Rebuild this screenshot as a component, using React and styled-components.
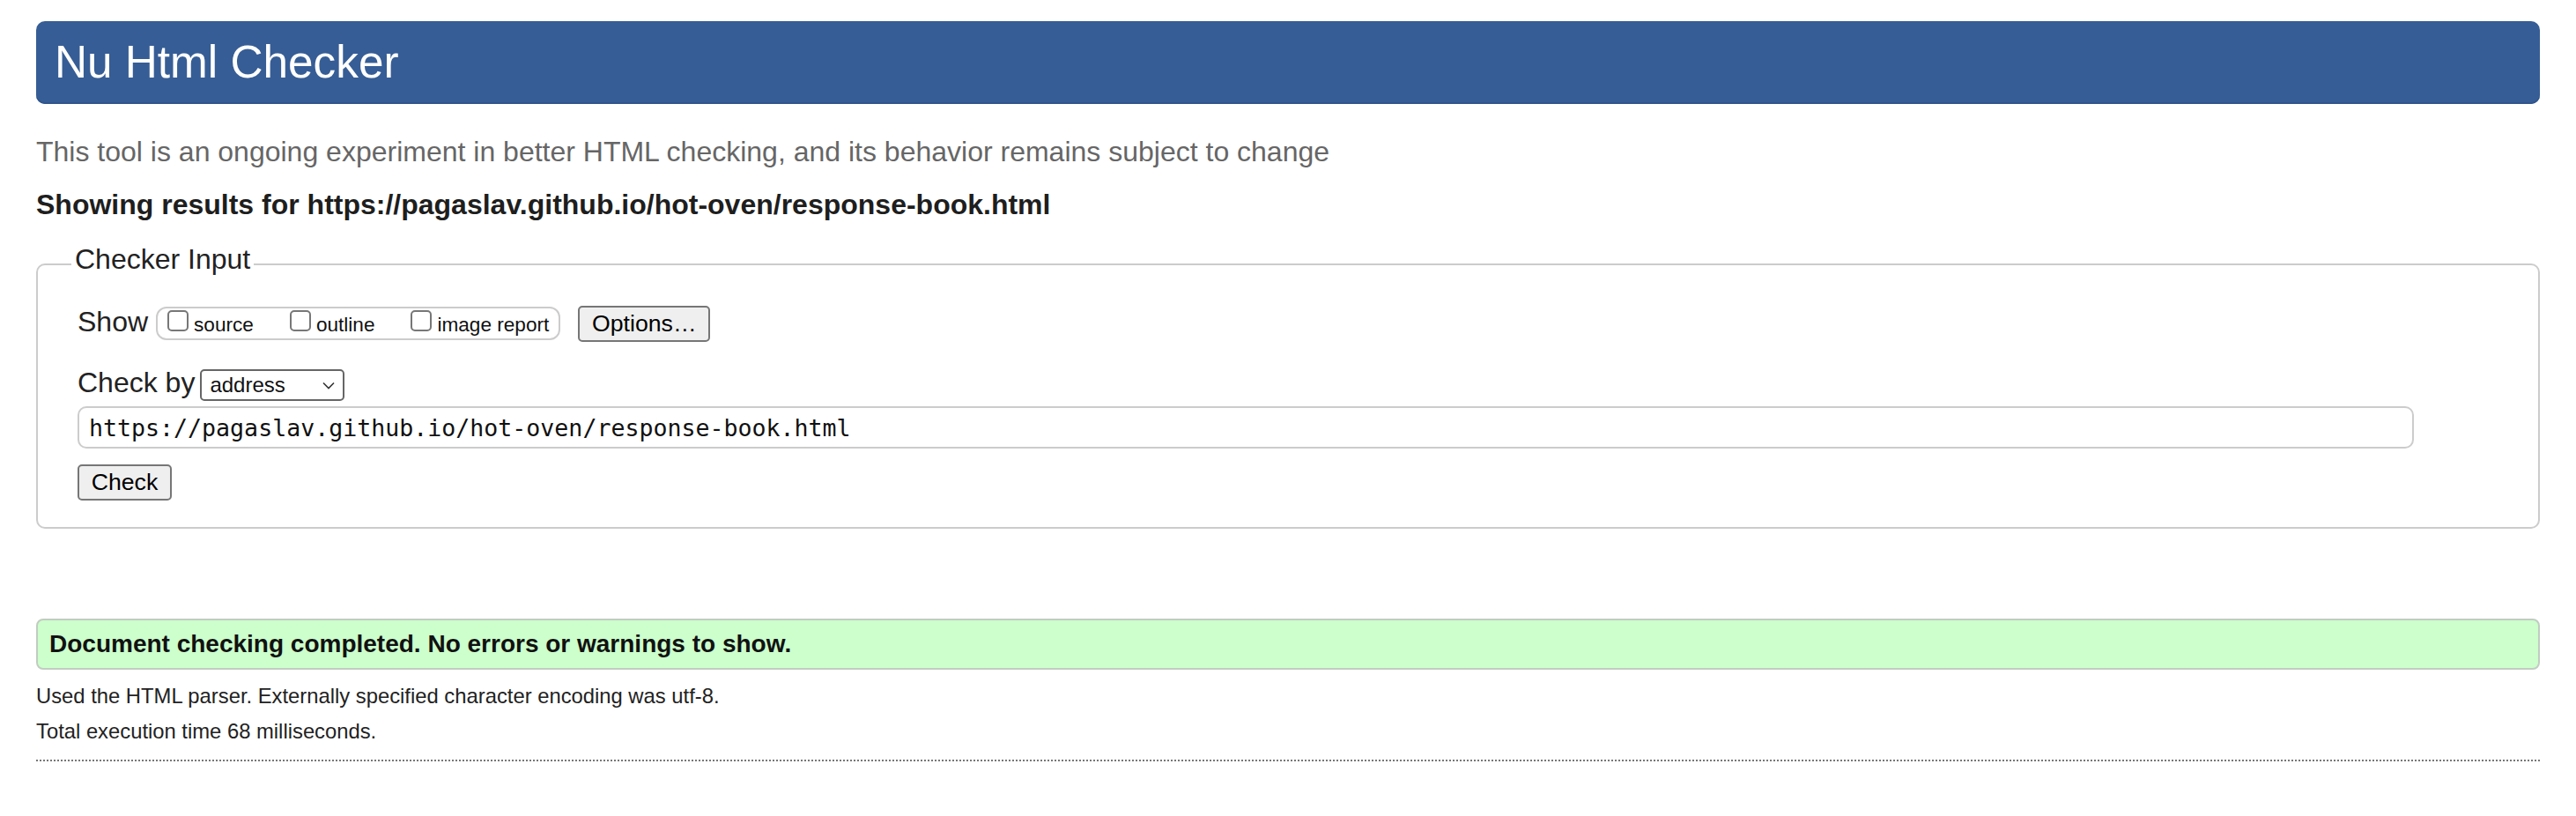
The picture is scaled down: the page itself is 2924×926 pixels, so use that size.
import React from "react";
import styled, { createGlobalStyle } from "styled-components";

const GlobalStyle = createGlobalStyle`
  html, body { margin: 0; padding: 0; background: #fff; }
  body {
    font-family: "Liberation Sans", Arial, Helvetica, sans-serif;
    color: #222;
  }
`;

const Page = styled.div`
  padding: 24px 41px 40px;
`;

const Banner = styled.h1`
  margin: 0;
  height: 94px;
  box-sizing: border-box;
  padding: 0 21px;
  background: #365d95;
  border-radius: 10px;
  box-shadow: inset 0 -2px 0 #30558c;
  color: #fff;
  font-weight: normal;
  font-size: 51.3px;
  line-height: 94px;
`;

const Tagline = styled.p`
  margin: 34px 0 0;
  font-size: 32px;
  line-height: 40px;
  color: #666;
`;

const ResultsFor = styled.h2`
  margin: 20px 0 0;
  font-size: 32px;
  line-height: 40px;
  font-weight: bold;
  color: #1e1e1e;
`;

const InputFieldset = styled.fieldset`
  margin: 22px 0 0;
  min-width: 0;
  border: 2px solid #ccc;
  border-radius: 10px;
  padding: 21px 45px 30px;
`;

const Legend = styled.legend`
  font-size: 32px;
  line-height: 40px;
  padding: 0 4px 12px;
  margin-left: -7px;
  color: #222;
`;

const ControlRow = styled.div`
  display: flex;
  align-items: baseline;
  margin-top: ${(p) => p.$top || 0}px;
`;

const RowLabel = styled.span`
  font-size: 32px;
  line-height: 1;
  color: #222;
  margin-right: ${(p) => p.$gap || 0}px;
`;

const ShowGroup = styled.span`
  display: inline-flex;
  align-items: baseline;
  height: 38px;
  box-sizing: border-box;
  border: 2px solid #ccc;
  border-radius: 12px;
  padding: 2px 11px 0;
  margin-right: 20px;
`;

const ShowOption = styled.label`
  display: inline-flex;
  align-items: baseline;
  margin-left: ${(p) => (p.$first ? 0 : 41)}px;
  font-size: 22.6px;
  line-height: 1.15;
  color: #111;
`;

const CheckBox = styled.span`
  display: inline-block;
  width: 24px;
  height: 24px;
  box-sizing: border-box;
  border: 2px solid #777;
  border-radius: 5px;
  background: #fff;
  margin-right: 6px;
`;

const PushButton = styled.button`
  font-family: "Liberation Sans", Arial, Helvetica, sans-serif;
  font-size: 26.67px;
  line-height: normal;
  color: #000;
  background: #efefef;
  border: 2px solid #767676;
  border-radius: 5px;
  height: 41px;
  box-sizing: border-box;
  width: ${(p) => p.$w}px;
  padding: 0;
  margin-top: ${(p) => p.$top || 0}px;
  display: ${(p) => (p.$block ? "block" : "inline-block")};
`;

const Dropdown = styled.div`
  display: inline-flex;
  align-items: center;
  justify-content: space-between;
  width: 164px;
  height: 36px;
  box-sizing: border-box;
  border: 2px solid #666;
  border-radius: 5px;
  padding: 0 9px 0 9px;
  font-size: 24px;
  color: #111;
  background: #fff;
`;

const UrlField = styled.div`
  margin-top: 6px;
  width: calc(100% - 96px);
  height: 48px;
  box-sizing: border-box;
  border: 2px solid #ccc;
  border-radius: 10px;
  padding: 0 11px;
  display: flex;
  align-items: center;
  font-family: "DejaVu Sans Mono", "Liberation Mono", monospace;
  font-size: 26.6px;
  color: #111;
`;

const SuccessBox = styled.div`
  margin-top: 102px;
  height: 58px;
  box-sizing: border-box;
  background: #ccffcc;
  border: 2px solid #c2ccc2;
  border-radius: 8px;
  padding: 0 13px;
  display: flex;
  align-items: center;
  font-size: 28px;
  font-weight: bold;
  color: #111;
`;

const Details = styled.div`
  margin-top: 10px;
`;

const DetailLine = styled.p`
  margin: 0;
  font-size: 23.8px;
  line-height: 40px;
  color: #222;
`;

const Separator = styled.hr`
  margin: 12px 0 0;
  border: 0;
  border-top: 2px dotted #777;
  height: 0;
`;

function Chevron() {
  return (
    <svg width="14" height="9" viewBox="0 0 14 9" aria-hidden="true">
      <path d="M1 1.5 L7 7.5 L13 1.5" fill="none" stroke="#333" strokeWidth="1.6" />
    </svg>
  );
}

const options = ["source", "outline", "image report"];

export default function App() {
  return (
    <>
      <GlobalStyle />
      <Page>
        <Banner>Nu Html Checker</Banner>
        <Tagline>
          This tool is an ongoing experiment in better HTML checking, and its behavior remains subject to change
        </Tagline>
        <ResultsFor>Showing results for https://pagaslav.github.io/hot-oven/response-book.html</ResultsFor>
        <InputFieldset>
          <Legend>Checker Input</Legend>
          <ControlRow>
            <RowLabel $gap={9}>Show</RowLabel>
            <ShowGroup>
              {options.map((o, i) => (
                <ShowOption key={o} $first={i === 0}>
                  <CheckBox />
                  {o}
                </ShowOption>
              ))}
            </ShowGroup>
            <PushButton $w={150}>Options…</PushButton>
          </ControlRow>
          <ControlRow $top={30}>
            <RowLabel $gap={6}>Check by</RowLabel>
            <Dropdown>
              <span>address</span>
              <Chevron />
            </Dropdown>
          </ControlRow>
          <UrlField>https://pagaslav.github.io/hot-oven/response-book.html</UrlField>
          <PushButton $w={107} $top={18} $block>
            Check
          </PushButton>
        </InputFieldset>
        <SuccessBox>Document checking completed. No errors or warnings to show.</SuccessBox>
        <Details>
          <DetailLine>Used the HTML parser. Externally specified character encoding was utf-8.</DetailLine>
          <DetailLine>Total execution time 68 milliseconds.</DetailLine>
        </Details>
        <Separator />
      </Page>
    </>
  );
}
